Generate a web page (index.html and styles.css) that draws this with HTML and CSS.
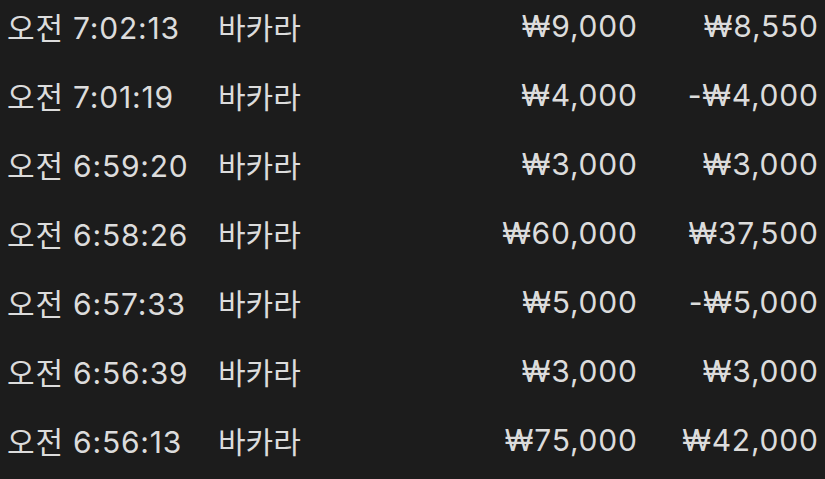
FILE: index.html
```html
<!DOCTYPE html>
<html lang="ko">
<head>
<meta charset="utf-8">
<link rel="stylesheet" href="styles.css">
</head>
<body>
<div class="list">
  <div class="row"><span class="time">오전 7:02:13</span><span class="game">바카라</span><span class="bet">₩9,000</span><span class="result">₩8,550</span></div>
  <div class="row"><span class="time">오전 7:01:19</span><span class="game">바카라</span><span class="bet">₩4,000</span><span class="result">-₩4,000</span></div>
  <div class="row"><span class="time">오전 6:59:20</span><span class="game">바카라</span><span class="bet">₩3,000</span><span class="result">₩3,000</span></div>
  <div class="row"><span class="time">오전 6:58:26</span><span class="game">바카라</span><span class="bet">₩60,000</span><span class="result">₩37,500</span></div>
  <div class="row"><span class="time">오전 6:57:33</span><span class="game">바카라</span><span class="bet">₩5,000</span><span class="result">-₩5,000</span></div>
  <div class="row"><span class="time">오전 6:56:39</span><span class="game">바카라</span><span class="bet">₩3,000</span><span class="result">₩3,000</span></div>
  <div class="row"><span class="time">오전 6:56:13</span><span class="game">바카라</span><span class="bet">₩75,000</span><span class="result">₩42,000</span></div>
</div>
</body>
</html>
```

FILE: styles.css
```css
html, body {
  margin: 0;
  padding: 0;
  background: #1c1c1c;
  height: 100%;
  overflow: hidden;
}
.list {
  margin-top: -9px;
  padding: 0 7px;
  font-family: Inter, "Noto Sans CJK KR", sans-serif;
  font-size: 30px;
  font-weight: 400;
  letter-spacing: 0.8px;
  color: #dcdcdc;
}
.row {
  display: grid;
  grid-template-columns: 211px 1fr 160px 181px;
  height: 69px;
  align-items: center;
  white-space: nowrap;
}
.game {
  letter-spacing: 0;
}
.bet, .result {
  text-align: right;
  margin-right: -0.8px;
}
```
